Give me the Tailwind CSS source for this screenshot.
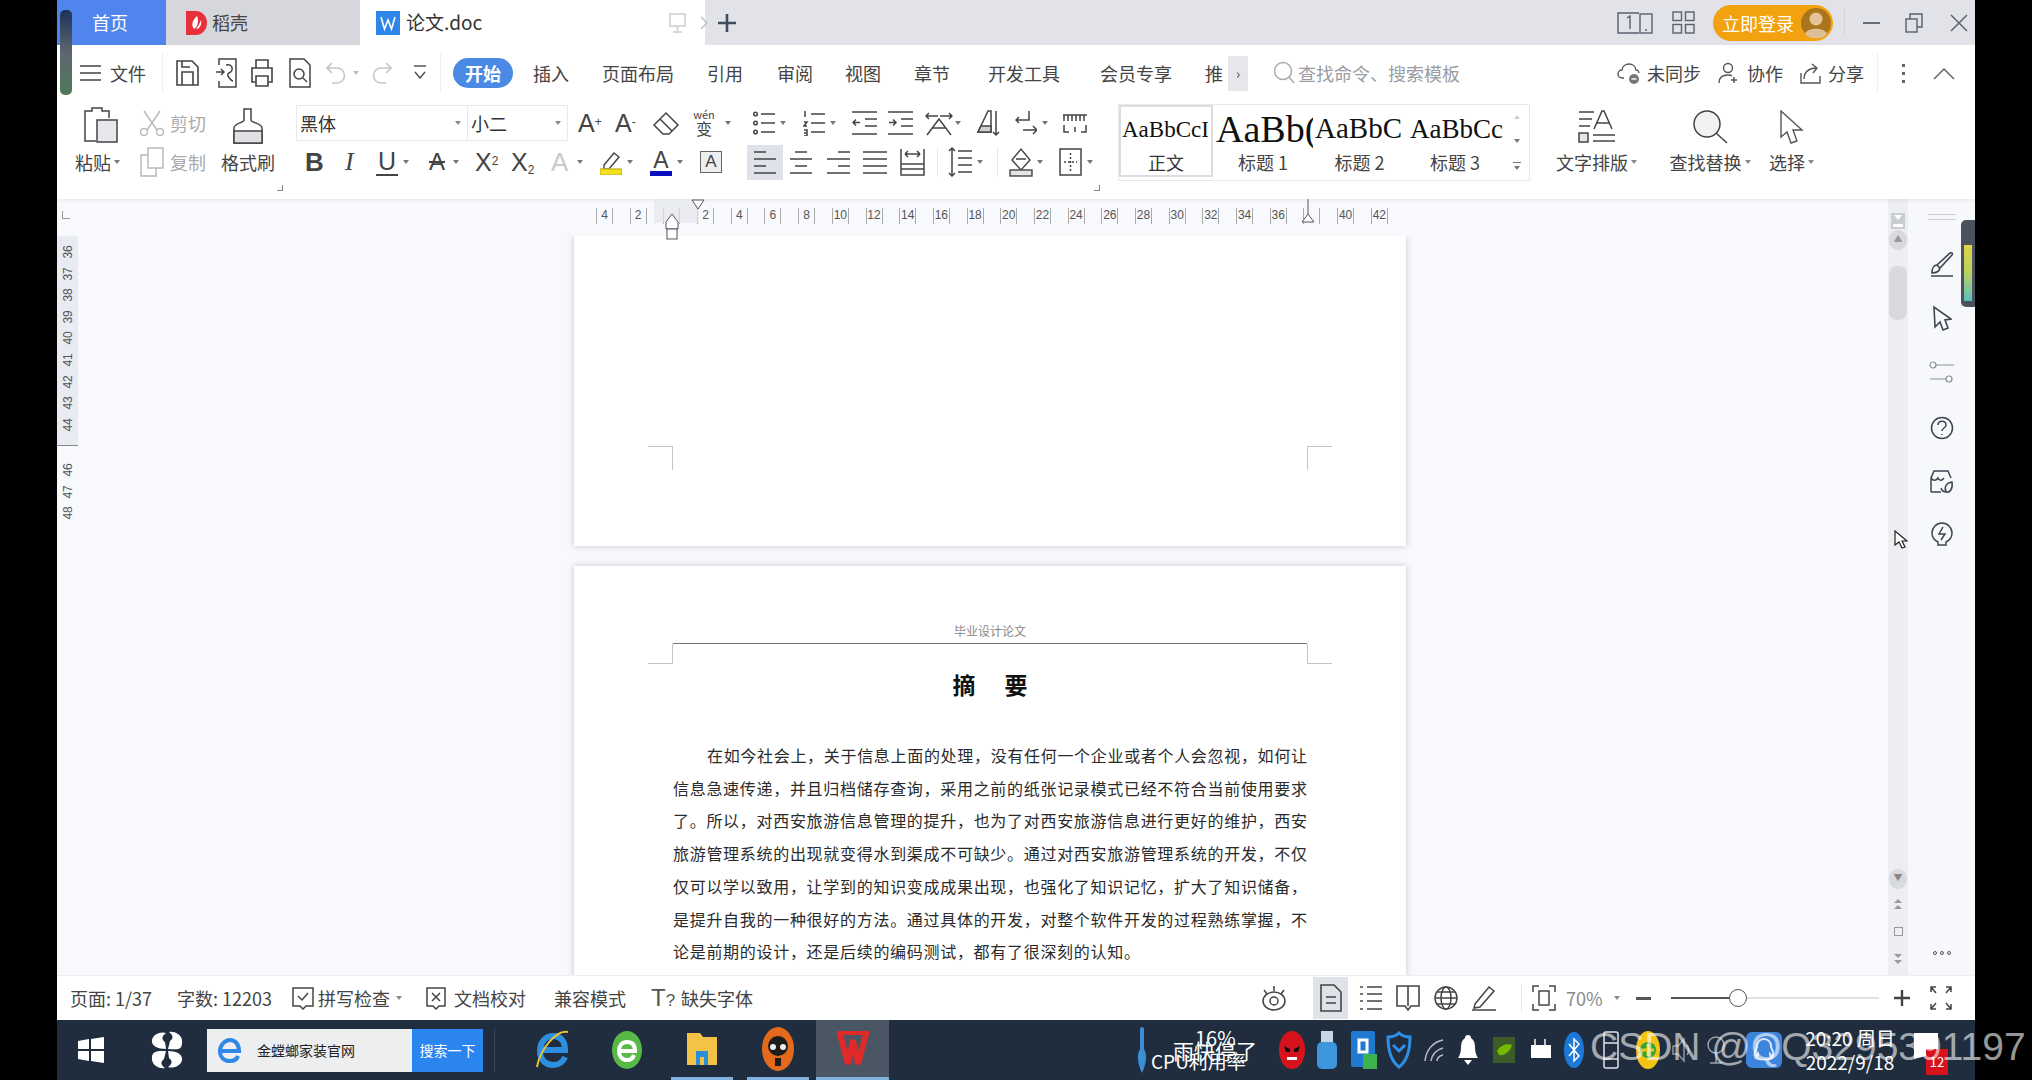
<!DOCTYPE html>
<html lang="zh-CN">
<head>
<meta charset="UTF-8">
<title>论文.doc - WPS</title>
<script src="https://cdn.jsdelivr.net/npm/@tailwindcss/browser@4"></script>
</head>
<body class="bg-black">
<div class="relative flex w-[2032px] h-[1080px] overflow-hidden bg-black font-['Noto_Sans_CJK_SC','Noto_Sans',sans-serif] text-[18px] text-[#444] whitespace-nowrap">
  <div class="w-[57px] shrink-0"></div>
  <div class="w-[1918px] shrink-0 flex flex-col bg-white">

    <!-- tab bar -->
    <div class="h-[45px] flex items-center bg-[#e1e3e8] shrink-0">
      <div class="w-[109px] h-full bg-[#5085ee] text-white text-[18px] flex items-center pl-[35px]">首页</div>
      <div class="w-[194px] h-full bg-[#d6d7dc] flex items-center pl-[20px] gap-[4px] text-[18px]">
        <svg width="22" height="24" viewBox="0 0 22 24"><path d="M0 0h10a11 12 0 0 1 0 24H0z" fill="#e8303a"/><path d="M11 5c-5 5-6 9-3 13 4-3 5-8 3-13zM15 9c-1 3-2 5-5 9 4 0 6-5 5-9z" fill="#fff"/></svg>
        <span>稻壳</span>
      </div>
      <div class="w-[345px] h-full bg-white flex items-center pl-[16px] text-[19px] text-[#333]">
        <svg class="shrink-0" width="24" height="24" viewBox="0 0 24 24"><rect width="24" height="24" fill="#2f86e8"/><path d="M5 6l3.500 12L12 9l3.500 9L19 6" fill="none" stroke="#fff" stroke-width="1.600"/></svg>
        <span class="ml-[6px] w-[74px]">论文.doc</span>
        <svg class="ml-[188px] shrink-0" width="20" height="22" viewBox="0 0 20 22" fill="none" stroke="#c8cad0" stroke-width="1.400"><rect x="2" y="2" width="15" height="12"/><path d="M9.500 14v5M5 20h9"/></svg>
        <svg class="ml-[12px] shrink-0" width="8" height="16" viewBox="0 0 8 16" fill="none" stroke="#b8bbc2" stroke-width="1.300"><path d="M1 2l6 6-6 6"/></svg>
      </div>
      <svg class="ml-[12px]" width="20" height="20" viewBox="0 0 20 20" fill="none" stroke="#3f4a5c" stroke-width="2.600"><path d="M10 1v18M1 10h18"/></svg>

      <svg class="ml-[880px]" width="36" height="24" viewBox="0 0 36 24" fill="none" stroke="#5a6070" stroke-width="1.400"><path d="M22 2H1v20h21"/><rect x="23" y="3" width="12" height="19"/><path d="M10 7l3-2v13M28 19h2"/></svg>
      <svg class="ml-[19px]" width="23" height="23" viewBox="0 0 23 23" fill="none" stroke="#5a6070" stroke-width="1.400"><rect x="1" y="1" width="8.500" height="8.500"/><rect x="13.500" y="1" width="8.500" height="8.500"/><rect x="1" y="13.500" width="8.500" height="8.500"/><rect x="13.500" y="13.500" width="8.500" height="8.500"/></svg>
      <div class="ml-[18px] w-[120px] h-[36px] rounded-full bg-[#f2a20f] flex items-center pl-[9px] text-[#fff] text-[18px] leading-none">
        <span>立即登录</span>
        <svg class="ml-[7px]" width="30" height="30" viewBox="0 0 30 30"><circle cx="15" cy="15" r="15" fill="#a8741c"/><circle cx="15" cy="11" r="6.500" fill="#e5c49c"/><path d="M4 26c2-7 20-7 22 0a15 15 0 0 1-22 0z" fill="#dcbf94"/></svg>
      </div>
      <div class="ml-[11px] w-px h-[28px] bg-[#d3d5da]"></div>
      <div class="ml-[18px] w-[17px] h-[2px] bg-[#666c78]"></div>
      <svg class="ml-[25px]" width="18" height="20" viewBox="0 0 18 20" fill="none" stroke="#5a6070" stroke-width="1.400"><rect x="1" y="6" width="11" height="13"/><path d="M5 6V1h12v13h-5"/></svg>
      <svg class="ml-[27px]" width="18" height="18" viewBox="0 0 18 18" fill="none" stroke="#5a6070" stroke-width="1.500"><path d="M1 1l16 16M17 1L1 17"/></svg>
    </div>

    <!-- menu row -->
    <div class="h-[58px] flex items-center shrink-0 text-[18px] text-[#444] pb-[2px]">
      <svg class="ml-[23px]" width="21" height="16" viewBox="0 0 21 16" stroke="#444" stroke-width="1.500"><path d="M0 1h21M0 8h21M0 15h21"/></svg>
      <span class="ml-[9px] w-[36px]">文件</span>
      <div class="ml-[16px] w-px h-[40px] bg-[#eeeeef]"></div>
      <svg class="ml-[12px]" width="25" height="30" viewBox="0 0 25 30" fill="none" stroke="#444" stroke-width="1.600"><path d="M2 3h15l6 6v18H2zM7 27V14h11v13M7 3v6h8"/></svg>
      <svg class="ml-[16px]" width="21" height="32" viewBox="0 0 21 32" fill="none" stroke="#444" stroke-width="1.500"><path d="M3 8V2h17v28H3v-6M0 15h8M5 12l3 3-3 3M10 8c7-2 8 6 3 8-4 2 3 8 4 8"/></svg>
      <svg class="ml-[14px]" width="22" height="30" viewBox="0 0 22 30" fill="none" stroke="#444" stroke-width="1.600"><path d="M5 10V2h12v8M5 24H1V10h20v14h-4M5 18h12v10H5z"/></svg>
      <svg class="ml-[16px]" width="22" height="32" viewBox="0 0 22 32" fill="none" stroke="#444" stroke-width="1.500"><path d="M1 2h14l6 6v22H1z"/><circle cx="10" cy="17" r="5"/><path d="M14 21l4 4"/></svg>
      <svg class="ml-[15px]" width="20" height="26" viewBox="0 0 20 26" fill="none" stroke="#c4c6ca" stroke-width="1.600"><path d="M6 3L1 8l5 5M1 8h10a7 7 0 0 1 0 15H6"/></svg>
      <span class="ml-[7px] w-0 h-0 border-x-[3px] border-t-[4px] border-x-transparent border-t-[#bbb]"></span>
      <svg class="ml-[13px]" width="20" height="26" viewBox="0 0 20 26" fill="none" stroke="#c4c6ca" stroke-width="1.600"><path d="M14 3l5 5-5 5M19 8H9a7 7 0 0 0 0 15h5"/></svg>
      <svg class="ml-[21px]" width="14" height="16" viewBox="0 0 14 16" fill="none" stroke="#555" stroke-width="1.500"><path d="M1 1h12M2 7l5 6 5-6"/></svg>
      <div class="ml-[13px] w-px h-[40px] bg-[#eeeeef]"></div>
      <div class="ml-[12px] w-[60px] h-[30px] rounded-full bg-[#4a8ae5] text-white font-bold flex items-center justify-center">开始</div>
      <span class="ml-[20px] w-[37px]">插入</span>
      <span class="ml-[32px] w-[72px]">页面布局</span>
      <span class="ml-[33px] w-[36px]">引用</span>
      <span class="ml-[34px] w-[35px]">审阅</span>
      <span class="ml-[33px] w-[36px]">视图</span>
      <span class="ml-[33px] w-[36px]">章节</span>
      <span class="ml-[38px] w-[73px]">开发工具</span>
      <span class="ml-[39px] w-[73px]">会员专享</span>
      <span class="ml-[32px] w-[23px] overflow-hidden">推</span>
      <div class="w-[20px] h-[35px] bg-[#e6e7ea] text-[14px] flex items-center justify-center">›</div>
      <svg class="ml-[25px]" width="22" height="24" viewBox="0 0 22 24" fill="none" stroke="#a8abb2" stroke-width="1.500"><circle cx="10" cy="10" r="8.500"/><path d="M16 16l5 6"/></svg>
      <span class="ml-[3px] w-[180px] text-[#9a9ca2]">查找命令、搜索模板</span>
      <svg class="ml-[139px]" width="24" height="26" viewBox="0 0 24 26" fill="none" stroke="#555" stroke-width="1.400"><path d="M7 18H5a4 4 0 0 1 0-8c1-8 13-8 14 0 2 0 3 2 3 3"/><circle cx="17" cy="19" r="5" fill="#777" stroke="none"/><path d="M14.500 19h5" stroke="#fff"/></svg>
      <span class="ml-[6px] w-[54px]">未同步</span>
      <svg class="ml-[17px]" width="22" height="22" viewBox="0 0 22 22" fill="none" stroke="#555" stroke-width="1.400"><circle cx="10" cy="6" r="4.500"/><path d="M1 21c0-5 3-8 9-8 2 0 3 0 4 1M16 15v6M13 18h6"/></svg>
      <span class="ml-[7px] w-[36px]">协作</span>
      <svg class="ml-[17px]" width="21" height="21" viewBox="0 0 21 21" fill="none" stroke="#555" stroke-width="1.400"><path d="M1 10v10h19v-7M4 16c0-7 5-11 12-11M12 1l5 4-4 5"/></svg>
      <span class="ml-[7px] w-[37px]">分享</span>
      <div class="ml-[12px] w-px h-[40px] bg-[#eeeeef]"></div>
      <div class="ml-[24px] w-[3px] flex flex-col gap-[5px]"><i class="block w-[3px] h-[3px] bg-[#666]"></i><i class="block w-[3px] h-[3px] bg-[#666]"></i><i class="block w-[3px] h-[3px] bg-[#666]"></i></div>
      <svg class="ml-[28px]" width="22" height="13" viewBox="0 0 22 13" fill="none" stroke="#666" stroke-width="1.500"><path d="M1 12L11 2l10 10"/></svg>
    </div>

    <!-- ribbon -->
    <div class="h-[96px] flex shrink-0 shadow-[0_2px_3px_rgba(0,0,0,0.06)] relative">
      <!-- clipboard -->
      <div class="w-[239px] shrink-0 flex flex-col">
        <div class="h-[78px] flex">
          <div class="ml-[18px] w-[43px] flex flex-col">
            <div class="h-[40px] flex items-center pl-[9px] pt-[4px]">
              <svg width="34" height="36" viewBox="0 0 34 36" fill="none" stroke="#444" stroke-width="1.500"><path d="M12 34H1V4h7V1h10v3h7v7"/><rect x="13" y="13" width="20" height="22" fill="#e6e8ec"/></svg>
            </div>
            <div class="h-[38px] flex items-center gap-[3px]">粘贴<span class="w-0 h-0 border-x-[3px] border-t-[4px] border-x-transparent border-t-[#777]"></span></div>
          </div>
          <div class="ml-[22px] w-[70px] flex flex-col text-[#aaa]">
            <div class="h-[40px] flex items-center gap-[6px]">
              <svg width="24" height="26" viewBox="0 0 24 26" fill="none" stroke="#b5b7bb" stroke-width="1.400"><path d="M4 1l13 19M20 1L7 20"/><circle cx="4" cy="22" r="3.500"/><circle cx="20" cy="22" r="3.500"/></svg>
              <span>剪切</span>
            </div>
            <div class="h-[38px] flex items-center gap-[6px]">
              <svg width="24" height="30" viewBox="0 0 24 30" fill="none" stroke="#b5b7bb" stroke-width="1.400"><rect x="8" y="1" width="15" height="20"/><path d="M8 8H1v21h15v-8"/></svg>
              <span>复制</span>
            </div>
          </div>
          <div class="ml-[10px] w-[56px] flex flex-col items-center">
            <div class="h-[40px] flex items-center pt-[6px]">
              <svg width="30" height="36" viewBox="0 0 30 36" fill="none" stroke="#444" stroke-width="1.500"><path d="M11 1h7v11c0 3 11 3 11 8v15H1V20c0-5 10-5 10-8z"/><path d="M1 23h28v12H1z" fill="#dfe1e5"/></svg>
            </div>
            <div class="h-[38px] flex items-center">格式刷</div>
          </div>
        </div>
        <div class="h-[14px] flex justify-end pr-[13px]"><span class="w-[6px] h-[6px] border-r border-b border-[#888] mt-[4px]"></span></div>
      </div>

      <!-- font and paragraph -->
      <div class="w-[822px] shrink-0 flex flex-col">
        <div class="h-[40px] flex items-center">
          <div class="w-[172px] h-[36px] border border-[#e8e9ec] flex items-center justify-between pl-[3px] pr-[6px] text-[#333]">黑体<span class="w-0 h-0 border-x-[3px] border-t-[4px] border-x-transparent border-t-[#888]"></span></div>
          <div class="w-[100px] h-[36px] border border-l-0 border-[#e8e9ec] flex items-center justify-between pl-[3px] pr-[6px] text-[#333]">小二<span class="w-0 h-0 border-x-[3px] border-t-[4px] border-x-transparent border-t-[#888]"></span></div>
          <span class="ml-[10px] w-[24px] font-['Liberation_Sans'] text-[25px] leading-none">A<sup class="text-[12px]">+</sup></span>
          <span class="ml-[13px] w-[23px] font-['Liberation_Sans'] text-[25px] leading-none">A<sup class="text-[12px]">-</sup></span>
          <svg class="ml-[14px]" width="28" height="26" viewBox="0 0 28 26" fill="none" stroke="#444" stroke-width="1.500"><path d="M2 15L14 3l12 12-9 9h-6zM8 9l12 12"/></svg>
          <div class="ml-[8px] w-[32px] h-[30px] text-center"><span class="block text-[11px] leading-[12px]">wén</span><span class="block text-[16px] leading-[16px]">变</span></div>
          <span class="ml-[5px] w-0 h-0 border-x-[3px] border-t-[4px] border-x-transparent border-t-[#777]"></span>
          <svg class="ml-[22px]" width="22" height="26" viewBox="0 0 22 26" fill="none" stroke="#444" stroke-width="1.500"><circle cx="2.500" cy="4" r="1.800"/><circle cx="2.500" cy="13" r="1.800"/><circle cx="2.500" cy="22" r="1.800"/><path d="M8 4h14M8 13h14M8 22h14"/></svg>
          <span class="ml-[5px] w-0 h-0 border-x-[3px] border-t-[4px] border-x-transparent border-t-[#777]"></span>
          <svg class="ml-[17px]" width="22" height="26" viewBox="0 0 22 26" fill="none" stroke="#444" stroke-width="1.500"><path d="M2 1v6M1 12h3l-3 4h3M1 20h3v6H1M1 23h3M8 4h14M8 13h14M8 22h14"/></svg>
          <span class="ml-[5px] w-0 h-0 border-x-[3px] border-t-[4px] border-x-transparent border-t-[#777]"></span>
          <svg class="ml-[16px]" width="25" height="26" viewBox="0 0 25 26" fill="none" stroke="#444" stroke-width="1.500"><path d="M0 2h25M13 9h12M13 16h12M0 24h25M8 12.500H1M4 9.500l-3 3 3 3"/></svg>
          <svg class="ml-[11px]" width="25" height="26" viewBox="0 0 25 26" fill="none" stroke="#444" stroke-width="1.500"><path d="M0 2h25M13 9h12M13 16h12M0 24h25M1 12.500h7M5 9.500l3 3-3 3"/></svg>
          <svg class="ml-[12px]" width="28" height="26" viewBox="0 0 28 26" fill="none" stroke="#444" stroke-width="1.500"><path d="M2 25l12-16 12 16M7 18h14M1 6h12M4 3L1 6l3 3M15 6h12M24 3l3 3-3 3"/></svg>
          <span class="ml-[2px] w-0 h-0 border-x-[3px] border-t-[4px] border-x-transparent border-t-[#777]"></span>
          <svg class="ml-[16px]" width="23" height="28" viewBox="0 0 23 28" fill="none" stroke="#444" stroke-width="1.500"><path d="M1 23L11 2h3v21z"/><path d="M4 17h10v6H1z" fill="#cfd1d6"/><path d="M19 2v24M16 23l3 3 3-3"/></svg>
          <svg class="ml-[15px]" width="22" height="26" viewBox="0 0 22 26" fill="none" stroke="#444" stroke-width="1.500"><path d="M14 1v9H1M4 7l-3 3 3 3M8 20h14M18 16l4 4-4 4"/></svg>
          <span class="ml-[5px] w-0 h-0 border-x-[3px] border-t-[4px] border-x-transparent border-t-[#777]"></span>
          <svg class="ml-[15px]" width="24" height="20" viewBox="0 0 24 20" fill="none" stroke="#444" stroke-width="1.500"><path d="M0 2h24M1 2v6M5 2v6M9 2v6M13 2v6M17 2v6M21 2v6M1 12v7h5M23 12v7h-5M12 14v5"/></svg>
        </div>
        <div class="h-[38px] flex items-center">
          <span class="ml-[9px] w-[18px] font-['Liberation_Sans'] font-bold text-[26px] leading-none">B</span>
          <span class="ml-[22px] w-[10px] font-['Liberation_Serif'] italic text-[26px] leading-none">I</span>
          <span class="ml-[21px] w-[22px] font-['Liberation_Sans'] text-[25px] leading-[26px] border-b-2 border-[#444] text-center">U</span>
          <span class="ml-[5px] w-0 h-0 border-x-[3px] border-t-[4px] border-x-transparent border-t-[#777]"></span>
          <span class="ml-[17px] w-[22px] font-['Liberation_Sans'] text-[24px] leading-none text-center line-through">A</span>
          <span class="ml-[5px] w-0 h-0 border-x-[3px] border-t-[4px] border-x-transparent border-t-[#777]"></span>
          <span class="ml-[16px] w-[25px] font-['Liberation_Sans'] text-[25px] leading-none">X<sup class="text-[12px]">2</sup></span>
          <span class="ml-[11px] w-[26px] font-['Liberation_Sans'] text-[25px] leading-none">X<sub class="text-[12px]">2</sub></span>
          <span class="ml-[14px] w-[21px] font-['Liberation_Sans'] text-[26px] leading-none text-[#c8cacd]">A</span>
          <span class="ml-[5px] w-0 h-0 border-x-[3px] border-t-[4px] border-x-transparent border-t-[#777]"></span>
          <svg class="ml-[17px]" width="22" height="26" viewBox="0 0 22 26" fill="none" stroke="#444" stroke-width="1.400"><path d="M4 16L14 4l5 4-10 12H4z"/><rect x="0" y="20" width="22" height="6" fill="#f6e11e" stroke="#c8b820"/></svg>
          <span class="ml-[5px] w-0 h-0 border-x-[3px] border-t-[4px] border-x-transparent border-t-[#777]"></span>
          <div class="ml-[17px] w-[22px] h-[27px] flex flex-col items-center font-['Liberation_Sans'] text-[23px] leading-[22px]">A<span class="block w-[22px] h-[5px] bg-[#0a0fc0]"></span></div>
          <span class="ml-[5px] w-0 h-0 border-x-[3px] border-t-[4px] border-x-transparent border-t-[#777]"></span>
          <div class="ml-[17px] w-[22px] h-[22px] border border-[#666] bg-[#eceef1] font-['Liberation_Sans'] text-[17px] leading-[20px] text-center">A</div>
          <div class="ml-[25px] w-[36px] h-[35px] bg-[#dfe3e9] flex items-center justify-center">
            <svg width="22" height="24" viewBox="0 0 22 24" fill="none" stroke="#444" stroke-width="1.500"><path d="M0 2h12M0 9h22M0 16h12M0 23h22"/></svg>
          </div>
          <svg class="ml-[7px]" width="22" height="24" viewBox="0 0 22 24" fill="none" stroke="#444" stroke-width="1.500"><path d="M5 2h12M0 9h22M5 16h12M0 23h22"/></svg>
          <svg class="ml-[15px]" width="23" height="24" viewBox="0 0 23 24" fill="none" stroke="#444" stroke-width="1.500"><path d="M11 2h12M0 9h23M11 16h12M0 23h23"/></svg>
          <svg class="ml-[13px]" width="24" height="24" viewBox="0 0 24 24" fill="none" stroke="#444" stroke-width="1.500"><path d="M0 2h24M0 9h24M0 16h24M0 23h24"/></svg>
          <svg class="ml-[13px]" width="25" height="28" viewBox="0 0 25 28" fill="none" stroke="#444" stroke-width="1.500"><path d="M1 1v26h23V1M5 6h15M5 6l3-3M5 6l3 3M20 6l-3-3M20 6l-3 3M1 16h23M1 21h23"/></svg>
          <div class="ml-[12px] w-px h-[30px] bg-[#e8e9ec]"></div>
          <svg class="ml-[10px]" width="24" height="30" viewBox="0 0 24 30" fill="none" stroke="#444" stroke-width="1.500"><path d="M10 4h14M10 11h14M10 18h14M10 25h14M4 1v28M1 4l3-3 3 3M1 26l3 3 3-3"/></svg>
          <span class="ml-[5px] w-0 h-0 border-x-[3px] border-t-[4px] border-x-transparent border-t-[#777]"></span>
          <div class="ml-[14px] w-px h-[30px] bg-[#e8e9ec]"></div>
          <svg class="ml-[11px]" width="24" height="30" viewBox="0 0 24 30" fill="none" stroke="#444" stroke-width="1.400"><path d="M3 13L12 2l9 11-9 10zM7 12h10"/><rect x="1" y="23" width="22" height="6" fill="#e4e5e8"/></svg>
          <span class="ml-[4px] w-0 h-0 border-x-[3px] border-t-[4px] border-x-transparent border-t-[#777]"></span>
          <svg class="ml-[16px]" width="23" height="28" viewBox="0 0 23 28" fill="none" stroke="#444" stroke-width="1.500"><rect x="1" y="1" width="21" height="26"/><path d="M11.500 5v18M5 14h13" stroke-dasharray="2 2"/></svg>
          <span class="ml-[5px] w-0 h-0 border-x-[3px] border-t-[4px] border-x-transparent border-t-[#777]"></span>
        </div>
        <div class="h-[14px] flex justify-end pr-[18px]"><span class="w-[6px] h-[6px] border-r border-b border-[#888] mt-[4px]"></span></div>
      </div>

      <!-- style gallery -->
      <div class="w-[412px] h-[77px] mt-[1px] shrink-0 border border-[#e8e9ec] flex">
        <div class="w-[94px] h-[72px] border-2 border-[#dcdde0] flex flex-col items-center overflow-hidden">
          <div class="h-[42px] w-full pl-[1px] pt-[4px] flex items-center font-['Liberation_Serif'] text-[23px] text-[#111] overflow-hidden">AaBbCcI</div>
          <span class="text-[#333] leading-[26px]">正文</span>
        </div>
        <div class="w-[100px] flex flex-col items-center overflow-hidden">
          <div class="h-[44px] w-full pl-[3px] pt-[4px] flex items-center font-['Liberation_Serif'] text-[38px] text-[#111] overflow-hidden">AaBb(</div>
          <span class="leading-[26px]">标题 1</span>
        </div>
        <div class="w-[93px] flex flex-col items-center overflow-hidden">
          <div class="h-[44px] w-full pl-[2px] pt-[4px] flex items-center font-['Liberation_Serif'] text-[29px] text-[#111] overflow-hidden">AaBbC</div>
          <span class="leading-[26px]">标题 2</span>
        </div>
        <div class="w-[98px] flex flex-col items-center overflow-hidden">
          <div class="h-[44px] w-full pl-[4px] pt-[4px] flex items-center font-['Liberation_Serif'] text-[27px] text-[#111] overflow-hidden">AaBbCc</div>
          <span class="leading-[26px]">标题 3</span>
        </div>
        <div class="flex-1 flex flex-col items-center justify-between py-[10px]">
          <span class="w-0 h-0 border-x-[3px] border-b-[4px] border-x-transparent border-b-[#ccc]"></span>
          <span class="w-0 h-0 border-x-[3px] border-t-[4px] border-x-transparent border-t-[#777]"></span>
          <span class="w-[8px] border-t border-[#777] flex justify-center"><span class="w-0 h-0 mt-[3px] border-x-[3px] border-t-[4px] border-x-transparent border-t-[#777]"></span></span>
        </div>
      </div>

      <!-- big buttons -->
      <div class="ml-[23px] w-[87px] flex flex-col">
        <div class="h-[40px] flex justify-center pt-[7px]">
          <svg width="38" height="33" viewBox="0 0 38 33" fill="none" stroke="#444" stroke-width="1.500"><path d="M1 2h15M1 9h13M1 16h11M16 19L24 1h2l8 18M18 13h14"/><rect x="1" y="23" width="9" height="9" fill="#e4e5e8"/><path d="M15 25h22M15 31h22"/></svg>
        </div>
        <div class="h-[38px] flex items-center justify-center gap-[3px]">文字排版<span class="w-0 h-0 border-x-[3px] border-t-[4px] border-x-transparent border-t-[#888]"></span></div>
      </div>
      <div class="ml-[28px] w-[84px] flex flex-col">
        <div class="h-[40px] flex justify-center pt-[7px]">
          <svg width="38" height="34" viewBox="0 0 38 34" fill="none" stroke="#444" stroke-width="1.500"><circle cx="16" cy="14" r="13" fill="#f1f2f4"/><path d="M25 23l11 10"/></svg>
        </div>
        <div class="h-[38px] flex items-center justify-center gap-[3px]">查找替换<span class="w-0 h-0 border-x-[3px] border-t-[4px] border-x-transparent border-t-[#888]"></span></div>
      </div>
      <div class="ml-[16px] w-[47px] flex flex-col">
        <div class="h-[40px] flex justify-center pt-[7px]">
          <svg width="26" height="34" viewBox="0 0 26 34" fill="none" stroke="#555" stroke-width="1.400"><path d="M2 1v26l6-5 4 11 6-2-4-11h9z"/></svg>
        </div>
        <div class="h-[38px] flex items-center justify-center gap-[3px]">选择<span class="w-0 h-0 border-x-[3px] border-t-[4px] border-x-transparent border-t-[#888]"></span></div>
      </div>
    </div>

    <!-- document area -->
    <div class="flex-1 min-h-0 flex bg-[#f7f9fc]">
      <div class="w-[1831px] shrink-0 flex flex-col">
        <!-- horizontal ruler -->
        <div class="relative h-[37px] shrink-0 flex items-center text-[12px] text-[#555] font-['Liberation_Sans']">
          <span class="absolute left-[5px] top-[12px] w-[8px] h-[8px] border-l border-b border-[#999]"></span>
          <div class="ml-[539px] flex mt-[-4px]">
            <div class="w-[33.7px]"><div class="w-[17px] h-[16px] border-x border-[#aaa] leading-[14px] text-center">4</div></div>
            <div class="w-[33.7px]"><div class="w-[17px] h-[16px] border-x border-[#aaa] leading-[14px] text-center">2</div></div>
            <div class="w-[33.7px]"><div class="w-[17px] h-[16px] border-x border-[#aaa]"></div></div>
            <div class="w-[33.7px]"><div class="w-[17px] h-[16px] border-x border-[#aaa] leading-[14px] text-center">2</div></div>
            <div class="w-[33.7px]"><div class="w-[17px] h-[16px] border-x border-[#aaa] leading-[14px] text-center">4</div></div>
            <div class="w-[33.7px]"><div class="w-[17px] h-[16px] border-x border-[#aaa] leading-[14px] text-center">6</div></div>
            <div class="w-[33.7px]"><div class="w-[17px] h-[16px] border-x border-[#aaa] leading-[14px] text-center">8</div></div>
            <div class="w-[33.7px]"><div class="w-[17px] h-[16px] border-x border-[#aaa] leading-[14px] text-center">10</div></div>
            <div class="w-[33.7px]"><div class="w-[17px] h-[16px] border-x border-[#aaa] leading-[14px] text-center">12</div></div>
            <div class="w-[33.7px]"><div class="w-[17px] h-[16px] border-x border-[#aaa] leading-[14px] text-center">14</div></div>
            <div class="w-[33.7px]"><div class="w-[17px] h-[16px] border-x border-[#aaa] leading-[14px] text-center">16</div></div>
            <div class="w-[33.7px]"><div class="w-[17px] h-[16px] border-x border-[#aaa] leading-[14px] text-center">18</div></div>
            <div class="w-[33.7px]"><div class="w-[17px] h-[16px] border-x border-[#aaa] leading-[14px] text-center">20</div></div>
            <div class="w-[33.7px]"><div class="w-[17px] h-[16px] border-x border-[#aaa] leading-[14px] text-center">22</div></div>
            <div class="w-[33.7px]"><div class="w-[17px] h-[16px] border-x border-[#aaa] leading-[14px] text-center">24</div></div>
            <div class="w-[33.7px]"><div class="w-[17px] h-[16px] border-x border-[#aaa] leading-[14px] text-center">26</div></div>
            <div class="w-[33.7px]"><div class="w-[17px] h-[16px] border-x border-[#aaa] leading-[14px] text-center">28</div></div>
            <div class="w-[33.7px]"><div class="w-[17px] h-[16px] border-x border-[#aaa] leading-[14px] text-center">30</div></div>
            <div class="w-[33.7px]"><div class="w-[17px] h-[16px] border-x border-[#aaa] leading-[14px] text-center">32</div></div>
            <div class="w-[33.7px]"><div class="w-[17px] h-[16px] border-x border-[#aaa] leading-[14px] text-center">34</div></div>
            <div class="w-[33.7px]"><div class="w-[17px] h-[16px] border-x border-[#aaa] leading-[14px] text-center">36</div></div>
            <div class="w-[33.7px]"><div class="w-[17px] h-[16px] border-x border-[#aaa]"></div></div>
            <div class="w-[33.7px]"><div class="w-[17px] h-[16px] border-x border-[#aaa] leading-[14px] text-center">40</div></div>
            <div class="w-[33.7px]"><div class="w-[17px] h-[16px] border-x border-[#aaa] leading-[14px] text-center">42</div></div>
          </div>
          <!-- indent markers sit over the ruler -->
          <span class="absolute left-[597px] top-0 w-[45px] h-[24px] bg-[#e4e7ec]/70"></span>
          <svg class="absolute left-[607px] top-[11px]" width="16" height="30" viewBox="0 0 16 30" fill="#fff" stroke="#555"><path d="M8 4l6 8v7H2v-7z"/><rect x="3" y="19" width="10" height="10"/></svg>
          <svg class="absolute left-[634px] top-0" width="14" height="11" viewBox="0 0 14 11" fill="#fff" stroke="#555"><path d="M1 1h12l-6 9z"/></svg>
          <svg class="absolute left-[1243px] top-[0px]" width="16" height="24" viewBox="0 0 16 24" fill="#fff" stroke="#555"><path d="M8 0v15M2 23l6-8 6 8z"/></svg>
        </div>

        <div class="flex-1 min-h-0 flex">
          <!-- vertical ruler -->
          <div class="w-[21px] shrink-0 flex flex-col text-[12px] text-[#555] font-['Liberation_Sans'] items-center">
            <div class="w-full h-[210px] border-b border-[#888] bg-[#e8ebf1] flex flex-col items-center pt-[5px]">
              <span class="h-[21.6px] [writing-mode:vertical-rl] rotate-180 text-center">36</span>
              <span class="h-[21.6px] [writing-mode:vertical-rl] rotate-180 text-center">37</span>
              <span class="h-[21.6px] [writing-mode:vertical-rl] rotate-180 text-center">38</span>
              <span class="h-[21.6px] [writing-mode:vertical-rl] rotate-180 text-center">39</span>
              <span class="h-[21.6px] [writing-mode:vertical-rl] rotate-180 text-center">40</span>
              <span class="h-[21.6px] [writing-mode:vertical-rl] rotate-180 text-center">41</span>
              <span class="h-[21.6px] [writing-mode:vertical-rl] rotate-180 text-center">42</span>
              <span class="h-[21.6px] [writing-mode:vertical-rl] rotate-180 text-center">43</span>
              <span class="h-[21.6px] [writing-mode:vertical-rl] rotate-180 text-center">44</span>
            </div>
            <div class="pt-[13px] flex flex-col items-center">
              <span class="h-[21.6px] [writing-mode:vertical-rl] rotate-180 text-center">46</span>
              <span class="h-[21.6px] [writing-mode:vertical-rl] rotate-180 text-center">47</span>
              <span class="h-[21.6px] [writing-mode:vertical-rl] rotate-180 text-center">48</span>
            </div>
          </div>

          <!-- pages -->
          <div class="flex-1 min-w-0 overflow-hidden pl-[496px]">
            <div class="w-[832px] h-[310px] bg-white shadow-[0_0_7px_rgba(0,0,0,0.2)] pt-[210px] px-[74px] flex justify-between items-start">
              <span class="w-[25px] h-[24px] border-t border-r border-[#c4c4c4]"></span>
              <span class="w-[25px] h-[24px] border-t border-l border-[#c4c4c4]"></span>
            </div>
            <div class="h-[20px]"></div>
            <div class="w-[832px] h-[420px] bg-white shadow-[0_0_7px_rgba(0,0,0,0.2)] px-[99px] pt-[55px] text-[#222]">
              <div class="h-[20px] text-[12px] leading-[20px] text-center text-[#888]">毕业设计论文</div>
              <div class="mt-[2px] border-t border-[#777]"></div>
              <div class="-mx-[25px] flex justify-between h-[20px]">
                <span class="w-[25px] h-[20px] border-b border-r border-[#c4c4c4]"></span>
                <span class="w-[25px] h-[20px] border-b border-l border-[#c4c4c4]"></span>
              </div>
              <div class="mt-[5px] h-[30px] text-[23px] leading-[30px] font-bold text-center text-[#111] tracking-[3px] pl-[3px]">摘&emsp;要</div>
              <div class="mt-[40px] text-[16px] leading-[32.7px] text-[#2a2a2a]">
                <div class="pl-[34px] [text-align-last:justify]">在如今社会上，关于信息上面的处理，没有任何一个企业或者个人会忽视，如何让</div>
                <div class="[text-align-last:justify]">信息急速传递，并且归档储存查询，采用之前的纸张记录模式已经不符合当前使用要求</div>
                <div class="[text-align-last:justify]">了。所以，对西安旅游信息管理的提升，也为了对西安旅游信息进行更好的维护，西安</div>
                <div class="[text-align-last:justify]">旅游管理系统的出现就变得水到渠成不可缺少。通过对西安旅游管理系统的开发，不仅</div>
                <div class="[text-align-last:justify]">仅可以学以致用，让学到的知识变成成果出现，也强化了知识记忆，扩大了知识储备，</div>
                <div class="[text-align-last:justify]">是提升自我的一种很好的方法。通过具体的开发，对整个软件开发的过程熟练掌握，不</div>
                <div class="tracking-[0.7px]">论是前期的设计，还是后续的编码测试，都有了很深刻的认知。</div>
              </div>
            </div>
          </div>
        </div>
      </div>

      <!-- scrollbar -->
      <div class="w-[20px] shrink-0 bg-[#eceef2] flex flex-col items-center">
        <svg class="mt-[14px]" width="14" height="16" viewBox="0 0 14 16"><rect width="14" height="16" fill="#c9ccd2"/><path d="M3 2h8l-4 5z" fill="#fff"/><path d="M2 11h10v3H2z" fill="#fff"/></svg>
        <div class="mt-[1px] w-[18px] h-[20px] rounded-full bg-[#d8dae0] text-[9px] leading-[18px] text-center text-[#999]">▲</div>
        <div class="mt-[16px] w-[18px] h-[54px] rounded-[8px] bg-[#d8dae0]"></div>
        <div class="mt-auto w-[18px] h-[20px] rounded-full bg-[#d8dae0] text-[9px] leading-[18px] text-center text-[#888]">▼</div>
        <svg class="mt-[10px]" width="10" height="12" viewBox="0 0 10 12" fill="#999"><path d="M5 0l4 4H1zM5 6l4 4H1z"/></svg>
        <div class="mt-[16px] w-[9px] h-[9px] border border-[#999]"></div>
        <svg class="mt-[16px] mb-[11px]" width="10" height="12" viewBox="0 0 10 12" fill="#999"><path d="M5 6L1 2h8zM5 12L1 8h8z"/></svg>
      </div>

      <!-- side panel -->
      <div class="w-[67px] shrink-0 bg-[#f7f8fb] flex flex-col items-center">
        <div class="mt-[15px] w-[28px] h-[6px] border-y border-[#ccc]"></div>
        <svg class="mt-[28px]" width="24" height="34" viewBox="0 0 24 34" fill="none" stroke="#3e4450" stroke-width="1.600"><path d="M1 28h22M20 5c2-1 3 1 2 2L10 20l-3-3zM7 17c-3 0-5 3-5 8 3 0 7-1 8-5"/></svg>
        <svg class="mt-[20px]" width="20" height="34" viewBox="0 0 20 34" fill="none" stroke="#3e4450" stroke-width="1.600"><path d="M2 5l1 20 5-5 3 8 5-2-3-8 6-1z"/></svg>
        <svg class="mt-[19px]" width="26" height="34" viewBox="0 0 26 34" fill="none" stroke="#8a8e96" stroke-width="1.200"><circle cx="4" cy="10" r="3"/><path d="M7 10h18M1 24h16"/><circle cx="20" cy="24" r="3"/></svg>
        <svg class="mt-[22px]" width="24" height="34" viewBox="0 0 24 34" fill="none" stroke="#3e4450" stroke-width="1.500"><circle cx="12" cy="17" r="10.500"/><path d="M8 14c0-5 8-5 8 0 0 3-4 3-4 6M12 23v1"/></svg>
        <svg class="mt-[20px]" width="26" height="34" viewBox="0 0 26 34" fill="none" stroke="#3e4450" stroke-width="1.500"><path d="M2 27V13L5 6h14l3 7M2 13c2 3 5 3 7 0 1 3 4 3 6 0M2 27h10M23 17c-6 1-8 5-6 10 4 1 7-3 6-10zM12 23c1 3 3 4 5 4"/></svg>
        <svg class="mt-[19px]" width="22" height="34" viewBox="0 0 22 34" fill="none" stroke="#3e4450" stroke-width="1.500"><path d="M7 27v-3C3 22 1 19 1 15a10 10 0 0 1 20 0c0 4-2 7-6 9v3zM12 9l-4 7h6l-4 6"/></svg>
        <div class="mt-auto mb-[20px] flex gap-[3px]"><i class="block w-[4px] h-[4px] rounded-full border border-[#555]"></i><i class="block w-[4px] h-[4px] rounded-full border border-[#555]"></i><i class="block w-[4px] h-[4px] rounded-full border border-[#555]"></i></div>
      </div>
    </div>

    <!-- status bar -->
    <div class="h-[45px] shrink-0 flex items-center bg-white border-t border-[#eceef1] text-[18px]">
      <span class="ml-[13px] w-[85px]">页面: 1/37</span>
      <span class="ml-[22px] w-[101px]">字数: 12203</span>
      <svg class="ml-[14px]" width="22" height="24" viewBox="0 0 22 24" fill="none" stroke="#444" stroke-width="1.500"><path d="M1 2h20v18h-7l-3 3-3-3H1zM6 10l4 4 6-7"/></svg>
      <span class="ml-[4px] w-[74px]">拼写检查</span>
      <span class="ml-[4px] w-0 h-0 border-x-[3px] border-t-[4px] border-x-transparent border-t-[#888]"></span>
      <svg class="ml-[24px]" width="20" height="24" viewBox="0 0 20 24" fill="none" stroke="#444" stroke-width="1.500"><path d="M1 2h18v18h-6l-3 3-3-3H1zM6 7l8 8M14 7l-8 8"/></svg>
      <span class="ml-[8px] w-[72px]">文档校对</span>
      <span class="ml-[28px] w-[72px]">兼容模式</span>
      <span class="ml-[25px] w-[30px] font-['Liberation_Sans'] text-[24px] leading-none text-[#555]">T<span class="text-[17px]">?</span></span>
      <span class="w-[72px]">缺失字体</span>
      <svg class="ml-[508px]" width="26" height="28" viewBox="0 0 26 28" fill="none" stroke="#444" stroke-width="1.500"><ellipse cx="13" cy="17" rx="11" ry="9"/><circle cx="13" cy="17" r="4"/><path d="M3 6l3 4M13 2v5M23 6l-3 4"/></svg>
      <div class="ml-[26px] w-[35px] h-[42px] bg-[#dfe3e9] flex items-center justify-center">
        <svg width="22" height="28" viewBox="0 0 22 28" fill="none" stroke="#444" stroke-width="1.600"><path d="M1 1h13l7 7v19H1zM6 13h10M6 19h10"/></svg>
      </div>
      <svg class="ml-[12px]" width="22" height="26" viewBox="0 0 22 26" fill="none" stroke="#444" stroke-width="1.600"><path d="M0 2h3M7 2h15M0 9h3M7 9h15M0 16h3M7 16h15M0 24h3M7 24h15"/></svg>
      <svg class="ml-[14px]" width="24" height="28" viewBox="0 0 24 28" fill="none" stroke="#444" stroke-width="1.600"><path d="M1 2h22v20h-8l-3 4-3-4H1zM12 2v20"/></svg>
      <svg class="ml-[14px]" width="24" height="24" viewBox="0 0 24 24" fill="none" stroke="#444" stroke-width="1.500"><circle cx="12" cy="12" r="11"/><ellipse cx="12" cy="12" rx="5" ry="11"/><path d="M1 12h22M3 6h18M3 18h18"/></svg>
      <svg class="ml-[13px]" width="26" height="26" viewBox="0 0 26 26" fill="none" stroke="#444" stroke-width="1.500"><path d="M4 19L18 2l5 4-14 16-6 1zM1 25h24"/></svg>
      <div class="ml-[24px] w-px h-[28px] bg-[#e3e4e7]"></div>
      <svg class="ml-[10px]" width="24" height="26" viewBox="0 0 24 26" fill="none" stroke="#444" stroke-width="1.500"><path d="M1 7V1h6M17 1h6v6M23 19v6h-6M7 25H1v-6"/><rect x="7" y="6" width="10" height="14"/></svg>
      <span class="ml-[10px] w-[40px] text-[#888]">70%</span>
      <span class="ml-[8px] w-0 h-0 border-x-[3px] border-t-[4px] border-x-transparent border-t-[#888]"></span>
      <div class="ml-[16px] w-[15px] h-[3px] bg-[#555]"></div>
      <div class="ml-[20px] w-[208px] h-[2px] bg-[#dfe0e3] flex items-center">
        <div class="w-[58px] h-[2px] bg-[#555]"></div>
        <div class="w-[18px] h-[18px] rounded-full bg-white border border-[#555]"></div>
      </div>
      <svg class="ml-[15px]" width="16" height="16" viewBox="0 0 16 16" stroke="#444" stroke-width="2.400"><path d="M8 0v16M0 8h16"/></svg>
      <svg class="ml-[20px]" width="22" height="24" viewBox="0 0 22 24" fill="none" stroke="#444" stroke-width="1.500"><path d="M1 6V1h5M1 1l5 6M21 6V1h-5M21 1l-5 6M1 18v5h5M1 23l5-6M21 18v5h-5M21 23l-5-6"/></svg>
    </div>

    <!-- taskbar -->
    <div class="h-[60px] shrink-0 flex items-center bg-[#202d3e] text-white relative">
      <svg class="ml-[21px]" width="26" height="26" viewBox="0 0 26 26" fill="#fff"><path d="M0 4l11-2v10H0zM13 2l13-2v12H13zM0 14h11v10L0 22zM13 14h13v12l-13-2z"/></svg>
      <svg class="ml-[46px]" width="34" height="38" viewBox="0 0 34 38" fill="#fff"><path d="M16 18C8 18 1 15 2 9c1-6 9-9 14-7-4 3-5 6-1 9zM18 18c8 0 15 3 14-9-1-6-8-9-13-8 4 3 5 6 1 9zM16 20c-8 0-15-1-14 9 1 6 8 9 13 8-4-3-5-6-1-9zM18 20c8 0 15 3 14 9-1 6-9 9-14 7 4-3 5-6 1-9z"/></svg>
      <div class="ml-[23px] w-[205px] h-[43px] bg-[#eceef0] flex items-center pl-[10px] text-[#222] text-[14px]">
        <svg width="26" height="28" viewBox="0 0 26 28" fill="none" stroke="#2f88e5" stroke-width="4"><path d="M4 15h18c0-7-4-11-9-11S3 9 3 15s4 10 10 10c4 0 7-2 8-5"/></svg>
        <span class="ml-[14px]">金螳螂家装官网</span>
      </div>
      <div class="w-[71px] h-[43px] bg-[#2b85ee] text-[14px] flex items-center justify-center">搜索一下</div>
      <div class="ml-[11px] w-px h-[43px] bg-[#394658]"></div>
      <div class="ml-[27px] w-[62px] h-full flex items-center justify-center">
        <svg width="36" height="42" viewBox="0 0 36 42" fill="none"><path d="M7 21h23c0-10-5-14-12-14S5 13 5 22s6 14 13 14c6 0 10-3 12-8" stroke="#2c8fe0" stroke-width="6"/><path d="M33 3C22 0 5 20 2 38" stroke="#e8c33a" stroke-width="2"/></svg>
      </div>
      <div class="ml-[12px] w-[62px] h-full flex items-center justify-center">
        <svg width="32" height="40" viewBox="0 0 32 40"><ellipse cx="16" cy="20" rx="15" ry="19" fill="#58b947"/><path d="M8 21h16c0-6-3-9-8-9s-8 4-8 9 3 9 8 9c3 0 6-2 7-5" fill="none" stroke="#fff" stroke-width="4"/></svg>
      </div>
      <div class="ml-[13px] w-[62px] h-full flex items-center justify-center border-b-[3px] border-[#7fb2dc]">
        <svg width="32" height="34" viewBox="0 0 32 34"><path d="M1 1h13l3 4h14v28H1z" fill="#f4c346"/><path d="M10 33V19h12v14h-4v-8h-4v8z" fill="#2d8ed8"/></svg>
      </div>
      <div class="ml-[14px] w-[62px] h-full flex items-center justify-center border-b-[3px] border-[#7fb2dc]">
        <svg width="34" height="46" viewBox="0 0 34 46"><ellipse cx="17" cy="23" rx="16" ry="22" fill="#e4691c"/><circle cx="17" cy="20" r="10" fill="#1c1c1c"/><circle cx="12" cy="21" r="3" fill="#eee"/><circle cx="22" cy="21" r="3" fill="#eee"/><rect x="14" y="32" width="6" height="8" fill="#1c1c1c"/></svg>
      </div>
      <div class="ml-[7px] w-[73px] h-full bg-[#4b5665] flex items-center justify-center border-b-[3px] border-[#7fb2dc]">
        <svg width="38" height="36" viewBox="0 0 38 36" fill="none" stroke="#e02a2a" stroke-width="6"><path d="M3 1h32M6 3l8 30 5-24 5 24 8-30"/></svg>
      </div>

      <svg class="ml-[247px]" width="12" height="46" viewBox="0 0 12 46" fill="#3b8fd6"><path d="M6 0a2 2 0 0 1 2 2v20c3 4 3 14-2 24-5-10-5-20-2-24V2a2 2 0 0 1 2-2z"/></svg>
      <div class="relative ml-[3px] w-[110px] h-full text-[20px] leading-none">
        <span class="absolute left-[44px] top-[8px]">16%</span>
        <span class="absolute left-[22px] top-[20px] text-[21px]">雨快停了</span>
        <span class="absolute left-0 top-[31px] text-[19px]">CPU利用率</span>
      </div>
      <svg class="ml-[18px]" width="26" height="40" viewBox="0 0 26 40"><ellipse cx="13" cy="20" rx="13" ry="19" fill="#d6131c"/><path d="M5 16l6 3v3H7zM21 16l-6 3v3h4z" fill="#111"/><path d="M8 27h10v3H8z" fill="#fff"/></svg>
      <svg class="ml-[11px]" width="22" height="40" viewBox="0 0 22 40"><rect x="5" y="1" width="12" height="12" fill="#c6d6e4"/><rect x="1" y="12" width="20" height="27" rx="5" fill="#3b96dc"/></svg>
      <svg class="ml-[13px]" width="26" height="40" viewBox="0 0 26 40"><rect x="0" y="1" width="24" height="36" rx="2" fill="#1f7ad2"/><path d="M8 10h8v12H8z" fill="none" stroke="#fff" stroke-width="3"/><rect x="12" y="24" width="14" height="15" fill="#3bb24a"/></svg>
      <svg class="ml-[9px]" width="26" height="38" viewBox="0 0 26 38" fill="none" stroke="#2d8fe8" stroke-width="3"><path d="M13 2c3 3 7 4 11 4 0 15-3 24-11 30C5 30 2 21 2 6c4 0 8-1 11-4zM7 14l6 6 6-6"/></svg>
      <svg class="ml-[11px]" width="22" height="24" viewBox="0 0 22 24" fill="none" stroke="#b8bfc8" stroke-width="1.500"><path d="M2 23C3 12 10 4 20 2M8 23c1-7 5-11 12-13M14 23c0-3 2-5 6-6"/></svg>
      <svg class="ml-[13px]" width="20" height="30" viewBox="0 0 20 30" fill="#fff"><path d="M10 0c2 0 3 1 3 3 3 2 4 5 4 9 0 5 1 8 3 11H0c2-3 3-6 3-11 0-4 1-7 4-9 0-2 1-3 3-3zM6 25h8l-4 5z"/></svg>
      <svg class="ml-[15px]" width="22" height="26" viewBox="0 0 22 26"><rect width="22" height="26" fill="#3e5c2a"/><path d="M4 14c3-6 10-8 15-6-2 7-8 11-13 10z" fill="#76b900"/></svg>
      <svg class="ml-[14px]" width="24" height="24" viewBox="0 0 24 24"><path d="M2 7h20v13H2z" fill="#fff"/><path d="M5 1h2v6H5zM15 1h2v6h-2z" fill="#c0c6cd"/></svg>
      <svg class="ml-[11px]" width="20" height="36" viewBox="0 0 20 36"><ellipse cx="10" cy="18" rx="10" ry="18" fill="#1b78d6"/><path d="M5 12l10 12-5 5V7l5 5L5 24" fill="none" stroke="#fff" stroke-width="1.500"/></svg>
      <svg class="ml-[17px]" width="20" height="38" viewBox="0 0 20 38" fill="none" stroke="#dfe3e8" stroke-width="1.500"><rect x="3" y="1" width="14" height="36" rx="2"/><path d="M3 12h14M3 28h14"/></svg>
      <svg class="ml-[15px]" width="24" height="38" viewBox="0 0 24 38"><ellipse cx="12" cy="19" rx="12" ry="19" fill="#f3c316"/><circle cx="12" cy="19" r="8" fill="#2ea43a"/><path d="M12 13v12M6 19h12" stroke="#f3c316" stroke-width="3"/></svg>
      <svg class="ml-[12px]" width="18" height="28" viewBox="0 0 18 28" fill="none" stroke="#8d96a1" stroke-width="1.500"><path d="M1 10h5l6-7v22l-6-7H1zM15 9c2 3 2 7 0 10"/></svg>
      <svg class="ml-[16px]" width="20" height="30" viewBox="0 0 20 30" fill="none" stroke="#9aa2ad" stroke-width="1.500"><circle cx="10" cy="10" r="8"/><path d="M10 18v10M4 28h12"/></svg>
      <svg class="ml-[20px]" width="36" height="36" viewBox="0 0 36 36"><rect width="36" height="36" rx="6" fill="#3d84dd"/><path d="M18 7a7 7 0 0 1 7 8c2 4 3 7 2 9-2-1-3-2-3-2s0 3 2 4c-3 2-13 2-16 0 2-1 2-4 2-4s-1 1-3 2c-1-2 0-5 2-9a7 7 0 0 1 7-8z" fill="none" stroke="#d9e6f6" stroke-width="2"/></svg>
      <div class="ml-[22px] w-[92px] text-[19px] leading-[24px] text-center">
        <div>20:20 周日</div>
        <div>2022/9/18</div>
      </div>
      <div class="ml-[28px] relative w-[24px] h-[50px]">
        <svg class="absolute left-[-10px] top-[8px]" width="24" height="26" viewBox="0 0 24 26" fill="#fff"><path d="M0 0h24v20L0 26z"/></svg>
        <span class="absolute left-[2px] bottom-0 w-[22px] h-[26px] bg-[#d8121c] text-[13px] leading-[26px] text-center">12</span>
      </div>
    </div>
  </div>
  <div class="w-[57px] shrink-0"></div>

  <!-- floating meters over the window edges -->
  <div class="absolute left-[60px] top-[10px] w-[12px] h-[85px] rounded-[5px] bg-gradient-to-b from-[#1c3358] via-[#5f6570] to-[#4d7a58]"></div>
  <div class="absolute left-[1961px] top-[220px] w-[14px] h-[87px] rounded-l-[5px] bg-[#4c525d] p-[3px]">
    <div class="mt-[22px] w-full h-[56px] bg-gradient-to-b from-[#e3d34a] via-[#b7d05c] to-[#54c0bd]"></div>
  </div>
  <!-- mouse pointer -->
  <svg class="absolute left-[1894px] top-[530px]" width="14" height="19" viewBox="0 0 14 19" fill="#fff" stroke="#222" stroke-width="1.200"><path d="M1 1v14l4-3 3 6 3-1-3-6h5z"/></svg>
  <!-- video watermark -->
  <div class="absolute left-[1590px] top-[1022px] font-['Liberation_Sans'] text-[39px] leading-[50px] text-white/60">CSDN @QQ3295391197</div>
</div>
</body>
</html>
